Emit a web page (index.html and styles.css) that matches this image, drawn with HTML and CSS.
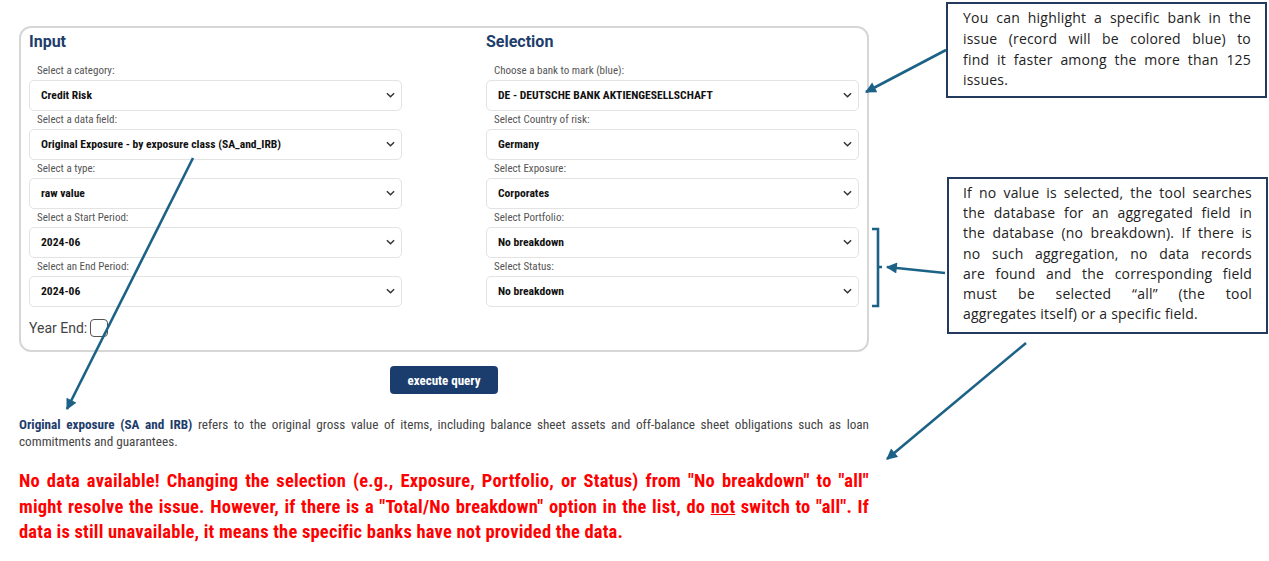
FILE: index.html
```html
<!DOCTYPE html>
<html lang="en">
<head>
    <meta charset="UTF-8">
    <meta name="viewport" content="width=device-width, initial-scale=1.0">
    <title>Credit Risk Query</title>
    <link rel="stylesheet" href="styles.css">
</head>
<body>
    <div class="page">
        <div class="panel">
            <div class="column">
                <h2>Input</h2>
                <div class="field">
                    <label>Select a category:</label>
                    <div class="select"><span>Credit Risk</span><svg class="chevron" viewBox="0 0 10 6"><path d="M1 1l4 4 4-4"/></svg></div>
                </div>
                <div class="field">
                    <label>Select a data field:</label>
                    <div class="select"><span>Original Exposure - by exposure class (SA_and_IRB)</span><svg class="chevron" viewBox="0 0 10 6"><path d="M1 1l4 4 4-4"/></svg></div>
                </div>
                <div class="field">
                    <label>Select a type:</label>
                    <div class="select"><span>raw value</span><svg class="chevron" viewBox="0 0 10 6"><path d="M1 1l4 4 4-4"/></svg></div>
                </div>
                <div class="field">
                    <label>Select a Start Period:</label>
                    <div class="select"><span>2024-06</span><svg class="chevron" viewBox="0 0 10 6"><path d="M1 1l4 4 4-4"/></svg></div>
                </div>
                <div class="field">
                    <label>Select an End Period:</label>
                    <div class="select"><span>2024-06</span><svg class="chevron" viewBox="0 0 10 6"><path d="M1 1l4 4 4-4"/></svg></div>
                </div>
                <div class="year-end">Year End: <span class="checkbox"></span></div>
            </div>
            <div class="column">
                <h2>Selection</h2>
                <div class="field">
                    <label>Choose a bank to mark (blue):</label>
                    <div class="select"><span>DE - DEUTSCHE BANK AKTIENGESELLSCHAFT</span><svg class="chevron" viewBox="0 0 10 6"><path d="M1 1l4 4 4-4"/></svg></div>
                </div>
                <div class="field">
                    <label>Select Country of risk:</label>
                    <div class="select"><span>Germany</span><svg class="chevron" viewBox="0 0 10 6"><path d="M1 1l4 4 4-4"/></svg></div>
                </div>
                <div class="field">
                    <label>Select Exposure:</label>
                    <div class="select"><span>Corporates</span><svg class="chevron" viewBox="0 0 10 6"><path d="M1 1l4 4 4-4"/></svg></div>
                </div>
                <div class="field">
                    <label>Select Portfolio:</label>
                    <div class="select"><span>No breakdown</span><svg class="chevron" viewBox="0 0 10 6"><path d="M1 1l4 4 4-4"/></svg></div>
                </div>
                <div class="field">
                    <label>Select Status:</label>
                    <div class="select"><span>No breakdown</span><svg class="chevron" viewBox="0 0 10 6"><path d="M1 1l4 4 4-4"/></svg></div>
                </div>
            </div>
        </div>

        <div class="actions">
            <button class="execute">execute query</button>
        </div>

        <p class="description">
            <span class="line"><strong>Original exposure (SA and IRB)</strong> refers to the original gross value of items, including balance sheet assets and off-balance sheet obligations such as loan</span>
            <span class="line last">commitments and guarantees.</span>
        </p>

        <p class="no-data">
            <span class="line">No data available! Changing the selection (e.g., Exposure, Portfolio, or Status) from "No breakdown" to "all"</span>
            <span class="line">might resolve the issue. However, if there is a "Total/No breakdown" option in the list, do <u>not</u> switch to "all". If</span>
            <span class="line last">data is still unavailable, it means the specific banks have not provided the data.</span>
        </p>
    </div>

    <!-- annotations -->
    <div class="note note-bank">
        <span class="line">You can highlight a specific bank in the</span>
        <span class="line">issue (record will be colored blue) to</span>
        <span class="line">find it faster among the more than 125</span>
        <span class="line last">issues.</span>
    </div>
    <div class="note note-breakdown">
        <span class="line">If no value is selected, the tool searches</span>
        <span class="line">the database for an aggregated field in</span>
        <span class="line">the database (no breakdown). If there is</span>
        <span class="line">no such aggregation, no data records</span>
        <span class="line">are found and the corresponding field</span>
        <span class="line">must be selected “all” (the tool</span>
        <span class="line last">aggregates itself) or a specific field.</span>
    </div>

    <svg class="arrows" width="1269" height="561" viewBox="0 0 1269 561">
        <defs>
            <marker id="head" viewBox="0 0 10 10" refX="9" refY="5" markerWidth="4.6" markerHeight="4.2" orient="auto">
                <path d="M0 0L10 5L0 10z" fill="#1c6287"/>
            </marker>
        </defs>
        <g stroke="#1c6287" stroke-width="2.6" fill="none">
            <line x1="946" y1="50" x2="866" y2="92" marker-end="url(#head)"/>
            <path d="M872 229H878V306H872M878 267H882"/>
            <line x1="945" y1="273" x2="887" y2="267" marker-end="url(#head)"/>
            <line x1="1026" y1="343" x2="887" y2="459" marker-end="url(#head)"/>
            <line x1="193" y1="158" x2="67" y2="409" marker-end="url(#head)"/>
        </g>
    </svg>
</body>
</html>
```

FILE: styles.css
```css
body {
    margin: 0;
    font-family: Roboto, Arial, sans-serif;
    background-color: #fff;
    color: #444;
}

.page {
    width: 850px;
    margin-left: 19px;
}

.panel {
    margin-top: 26px;
    border: 2px solid #d6d6d6;
    border-radius: 12px;
    padding: 4px 8px 13px;
    display: grid;
    grid-template-columns: 373px 373px;
    column-gap: 84px;
    align-items: start;
}

h2 {
    margin: 0 0 10px;
    font-size: 16px;
    line-height: 20px;
    font-weight: bold;
    color: #1d3d6b;
}

.field label {
    display: block;
    padding-left: 8px;
    font-family: "Roboto Condensed", Roboto, sans-serif;
    font-size: 11px;
    line-height: 18px;
    color: #555;
}

.select {
    box-sizing: border-box;
    height: 31px;
    border: 1px solid #e3e3e3;
    border-radius: 5px;
    display: flex;
    align-items: center;
    justify-content: space-between;
    padding: 0 6px 1px 11px;
    font-family: "Roboto Condensed", Roboto, sans-serif;
    font-size: 11.6px;
    font-weight: bold;
    color: #111;
}

.chevron {
    width: 9px;
    height: 6px;
    fill: none;
    stroke: #333;
    stroke-width: 1.6;
}

.year-end {
    margin-top: 12px;
    display: flex;
    align-items: center;
    gap: 3px;
    height: 18px;
    font-size: 14px;
    color: #444;
}

.checkbox {
    box-sizing: border-box;
    width: 18px;
    height: 18px;
    border: 1.5px solid #555;
    border-radius: 4px;
}

.actions {
    margin-top: 14px;
    text-align: center;
}

.execute {
    width: 108px;
    height: 28px;
    border: none;
    border-radius: 4px;
    background-color: #1b3d6d;
    color: #fff;
    font-family: "Roboto Condensed", Roboto, sans-serif;
    font-size: 13px;
    font-weight: bold;
}

/* lines are broken as in the source document */
.line {
    display: block;
    white-space: nowrap;
    text-align: justify;
    text-align-last: justify;
}

.line.last {
    text-align-last: left;
}

.description {
    margin: 22px 0 0;
    font-family: "Roboto Condensed", Roboto, sans-serif;
    font-size: 13.2px;
    line-height: 17px;
    color: #444;
}

.description strong {
    color: #1d3d6b;
}

.no-data {
    margin: 19px 0 0;
    font-family: "Roboto Condensed", Roboto, sans-serif;
    font-size: 18.5px;
    letter-spacing: 0.2px;
    line-height: 25.5px;
    font-weight: bold;
    color: #ff0000;
}

.note {
    position: absolute;
    box-sizing: border-box;
    width: 321px;
    border: 2px solid #23395d;
    background-color: #fff;
    font-family: "Open Sans", sans-serif;
    font-size: 14px;
    letter-spacing: 0.2px;
    color: #222;
}

.note-bank {
    left: 946px;
    top: 2px;
    height: 96px;
    padding: 4px 14px 0 15px;
    line-height: 20.8px;
}

.note-breakdown {
    left: 947px;
    top: 177px;
    height: 157px;
    padding: 4px 14px 0 14px;
    line-height: 20.2px;
}

.arrows {
    position: absolute;
    left: 0;
    top: 0;
    pointer-events: none;
}
```
